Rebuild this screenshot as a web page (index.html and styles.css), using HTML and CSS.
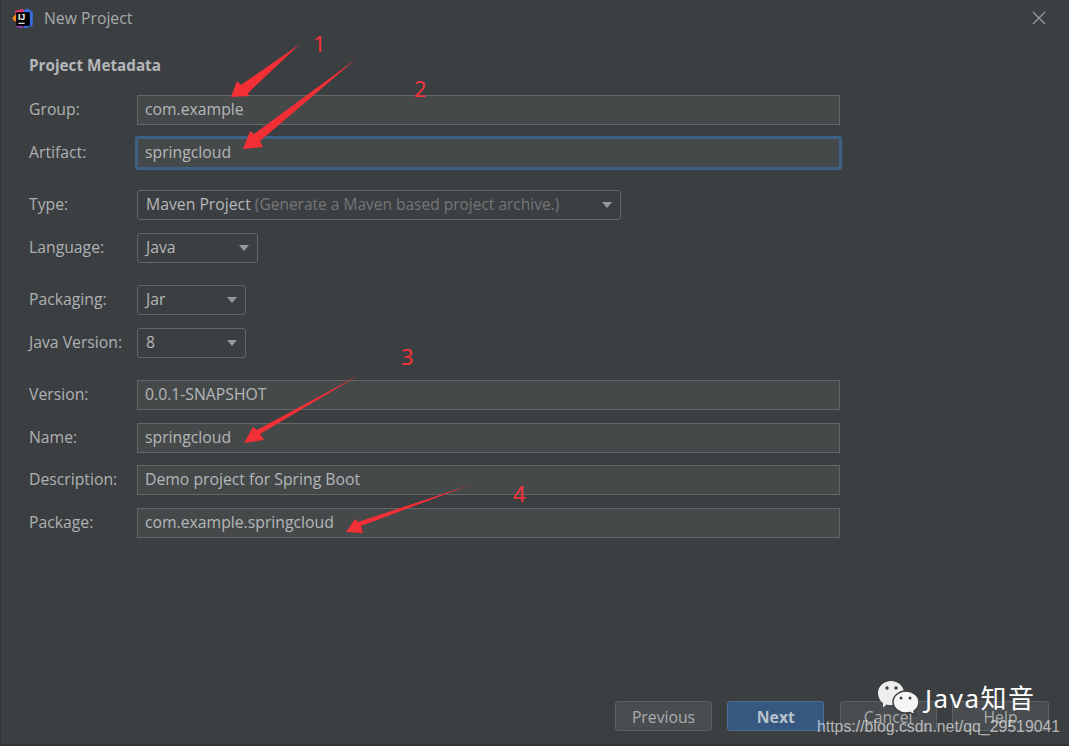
FILE: index.html
```html
<!DOCTYPE html>
<html lang="en">
<head>
<meta charset="utf-8">
<title>New Project</title>
<link rel="stylesheet" href="styles.css">
</head>
<body>
<div class="dialog">
  <header class="titlebar">
    <svg class="logo" viewBox="0 0 20 20" width="21" height="21">
      <defs>
        <linearGradient id="pink" x1="0" y1="0" x2="0" y2="1">
          <stop offset="0" stop-color="#f0345f"/>
          <stop offset="1" stop-color="#8f3bb5"/>
        </linearGradient>
      </defs>
      <path d="M9 3 L15 0.5 L20 4 L19.5 17 L12 19.5 Z" fill="#3c6fe6"/>
      <path d="M3 2.5 L11 1 L10 19.5 L4 18 Z" fill="url(#pink)"/>
      <path d="M0.5 9 L4 6 L4 13 L1.5 12 Z" fill="#f98a12"/>
      <rect x="4" y="4" width="13" height="13" fill="#000"/>
      <rect x="6" y="14" width="6" height="1.2" fill="#ddd"/>
      <text x="5.6" y="11.8" class="logo-text">IJ</text>
    </svg>
    <span class="title">New Project</span>
    <svg class="close" viewBox="0 0 14 14" width="14" height="14"><path d="M1 1 L13 13 M13 1 L1 13" stroke="#9a9d9f" stroke-width="1.2" fill="none"/></svg>
  </header>

  <main class="form">
    <h2 class="heading">Project Metadata</h2>

    <section class="group group-first">
      <div class="row"><label class="label">Group:</label><div class="field">com.example</div></div>
      <div class="row"><label class="label">Artifact:</label><div class="field focused">springcloud</div></div>
    </section>

    <section class="group">
      <div class="row"><label class="label">Type:</label><div class="select select-type"><span class="value">Maven Project <em class="hint">(Generate a Maven based project archive.)</em></span><i class="caret"></i></div></div>
      <div class="row"><label class="label">Language:</label><div class="select select-lang"><span class="value">Java</span><i class="caret"></i></div></div>
    </section>

    <section class="group">
      <div class="row"><label class="label">Packaging:</label><div class="select select-small"><span class="value">Jar</span><i class="caret"></i></div></div>
      <div class="row"><label class="label">Java Version:</label><div class="select select-small"><span class="value">8</span><i class="caret"></i></div></div>
    </section>

    <section class="group">
      <div class="row"><label class="label">Version:</label><div class="field">0.0.1-SNAPSHOT</div></div>
      <div class="row"><label class="label">Name:</label><div class="field">springcloud</div></div>
      <div class="row"><label class="label">Description:</label><div class="field">Demo project for Spring Boot</div></div>
      <div class="row"><label class="label">Package:</label><div class="field">com.example.springcloud</div></div>
    </section>
  </main>

  <footer class="actions">
    <button class="btn">Previous</button>
    <button class="btn btn-primary">Next</button>
    <button class="btn">Cancel</button>
    <button class="btn">Help</button>
  </footer>

  <svg class="arrows" viewBox="0 0 1069 746" width="1069" height="746">
    <polygon points="300,44 248,93 249,96 231,97 237,81 241,85"/>
    <polygon points="356,59 260,141 263,147 243,149 250,131 254,134"/>
    <polygon points="361,374 260,434 264,440 244,443 253,427 257,430"/>
    <polygon points="470,485 361,526 363,533 346,532 355,519 358,522"/>
  </svg>
  <span class="num num1">1</span>
  <span class="num num2">2</span>
  <span class="num num3">3</span>
  <span class="num num4">4</span>

  <div class="wm-brand">
    <svg class="wm-icon" viewBox="0 0 42 36" width="42" height="36">
      <path d="M14 1 C21 1 27 6 27 13 C27 19 21 25 14 25 C12 25 11 25 9.5 24.5 L6 27.5 L6 23 C3 21 1 17 1 13 C1 6 7 1 14 1 Z" fill="#eee"/>
      <path d="M29 11 C36 11 42 16 42 22 C42 26 40 29 37 31 L38 35 L33 32.5 C31.500 33 30 33 29 33 C22 33 16 28 16 22 C16 16 22 11 29 11 Z" fill="#f4f4f4" stroke="#3b3f42" stroke-width="1.5"/>
      <circle cx="10" cy="8" r="1.7" fill="#3b3f42"/><circle cx="19" cy="8" r="1.7" fill="#3b3f42"/>
      <circle cx="24" cy="18" r="1.5" fill="#3b3f42"/><circle cx="33" cy="18" r="1.5" fill="#3b3f42"/>
    </svg>
    <span class="wm-name">Java知音</span>
  </div>
  <span class="wm-url">https://blog.csdn.net/qq_29519041</span>
</div>
</body>
</html>
```
FILE: styles.css
```css
* { box-sizing: border-box; }
html, body { margin: 0; padding: 0; }
body { width: 1069px; height: 746px; overflow: hidden; background: #3c3f41; font-family: "Open Sans", "Noto Sans", sans-serif; font-size: 15.75px; color: #b4b7b9; }
.dialog { position: relative; width: 1069px; height: 746px; display: flex; flex-direction: column; background: #3c3f41; border-left: 1px solid #323537; border-bottom: 2px solid #323537; }
.titlebar { display: flex; align-items: center; height: 36px; padding: 0 23px 0 11px; flex: none; }
.logo { flex: none; }
.logo-text { font-family: "Liberation Sans", sans-serif; font-size: 8.5px; font-weight: 700; fill: #fff; }
.title { margin-left: 11px; color: #a7aaac; }
.close { margin-left: auto; }
.form { padding: 0 0 0 28px; flex: 1; }
.heading { margin: 20px 0 0; height: 19px; font-size: 15.25px; line-height: 19px; font-weight: 700; color: #b4b7b9; }
.group { display: flex; flex-direction: column; gap: 12.67px; margin-top: 22.33px; }
.group-first { margin-top: 20px; }
.row { display: flex; align-items: center; height: 30px; }
.label { flex: none; width: 108px; padding-bottom: 2px; color: #aeb1b3; }
.field { width: 703px; height: 30px; padding: 0 7px; line-height: 26px; background: #45494a; border: 1px solid #636566; color: #b4b7b9; }
.focused { border-color: #3d6185; box-shadow: 0 0 0 2px #3d6185; border-radius: 1px; }
.select { display: flex; align-items: center; justify-content: space-between; height: 30px; padding: 0 8px 0 8px; border: 1px solid #646667; border-radius: 3px; color: #b4b7b9; }
.value { padding-bottom: 2px; }
.select-type { width: 484px; }
.select-lang { width: 121px; }
.select-small { width: 109px; }
.hint { font-style: normal; font-size: 15.5px; color: #747779; }
.caret { width: 0; height: 0; border-left: 5.5px solid transparent; border-right: 5.5px solid transparent; border-top: 6px solid #98999a; }
.actions { flex: none; display: flex; justify-content: flex-end; gap: 15.33px; padding: 0 20px 13px 0; }
.btn { width: 97px; height: 30px; padding: 1px 0 0; border: 1px solid #5e6060; border-radius: 3px; background: #4a4d4f; color: #a9acae; font-family: inherit; font-size: 15.75px; }
.btn-primary { background: #365880; border-color: #4b6f97; color: #b9c2cc; font-weight: 700; }
.arrows { position: absolute; left: -1px; top: 0; pointer-events: none; }
.arrows polygon { fill: #f22f35; }
.num { position: absolute; color: #f2343a; font-family: "Noto Sans", sans-serif; font-size: 22px; line-height: 24px; }
.num1 { left: 312px; top: 31px; }
.num2 { left: 413px; top: 76px; }
.num3 { left: 400px; top: 344px; }
.num4 { left: 512px; top: 481px; }
.wm-brand { position: absolute; left: 876px; top: 680px; display: flex; align-items: center; gap: 6px; }
.wm-name { color: #fff; font-family: "Noto Sans", "Noto Sans CJK SC", sans-serif; font-size: 26px; line-height: 36px; letter-spacing: 1.5px; }
.wm-url { position: absolute; left: 816px; top: 718px; font-family: "Liberation Sans", sans-serif; font-size: 15.85px; line-height: 18px; color: rgba(255,255,255,.62); white-space: nowrap; }
```
